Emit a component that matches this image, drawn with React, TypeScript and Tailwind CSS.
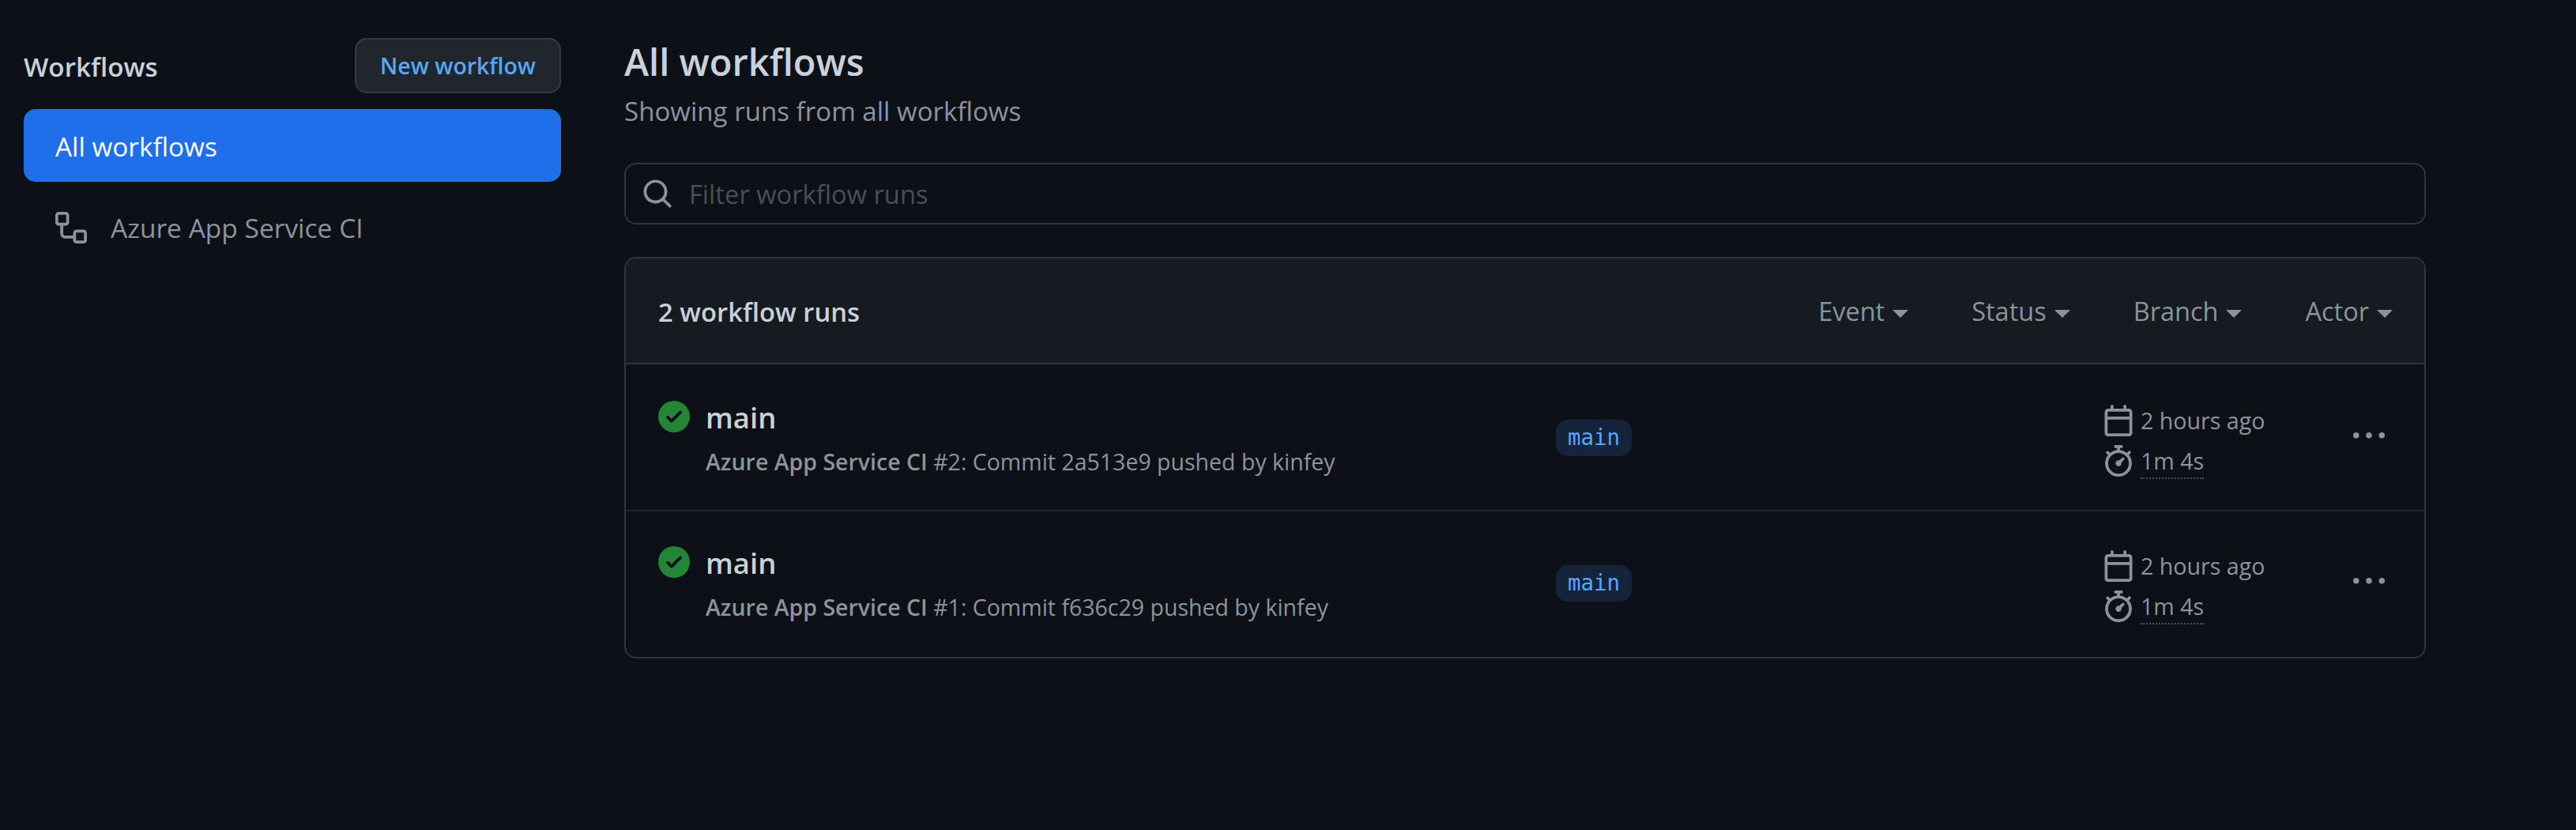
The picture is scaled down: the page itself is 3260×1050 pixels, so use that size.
const WORKFLOW = "M0 1.75C0 .784.784 0 1.75 0h3.5C6.216 0 7 .784 7 1.75v3.5A1.75 1.75 0 0 1 5.25 7H4v4a1 1 0 0 0 1 1h4v-1.25C9 9.784 9.784 9 10.75 9h3.5c.966 0 1.75.784 1.75 1.75v3.5A1.75 1.75 0 0 1 14.25 16h-3.5A1.75 1.75 0 0 1 9 14.25v-.75H5A2.5 2.5 0 0 1 2.5 11V7h-.75A1.75 1.75 0 0 1 0 5.25Zm1.75-.25a.25.25 0 0 0-.25.25v3.5c0 .138.112.25.25.25h3.5a.25.25 0 0 0 .25-.25v-3.5a.25.25 0 0 0-.25-.25Zm9 9a.25.25 0 0 0-.25.25v3.5c0 .138.112.25.25.25h3.5a.25.25 0 0 0 .25-.25v-3.5a.25.25 0 0 0-.25-.25Z";
const SEARCH = "M10.68 11.74a6 6 0 0 1-7.922-8.982 6 6 0 0 1 8.982 7.922l3.04 3.04a.749.749 0 0 1-.326 1.275.749.749 0 0 1-.734-.215ZM11.5 7a4.499 4.499 0 1 0-8.997 0A4.499 4.499 0 0 0 11.5 7Z";
const CHECK = "M8 16A8 8 0 1 1 8 0a8 8 0 0 1 0 16Zm3.78-9.72a.751.751 0 0 0-.018-1.042.751.751 0 0 0-1.042-.018L6.75 9.19 5.28 7.72a.751.751 0 0 0-1.042.018.751.751 0 0 0-.018 1.042l2 2a.75.75 0 0 0 1.06 0Z";
const CALENDAR = "M4.75 0a.75.75 0 0 1 .75.75V2h5V.75a.75.75 0 0 1 1.5 0V2h1.25c.966 0 1.75.784 1.75 1.75v10.5A1.75 1.75 0 0 1 13.25 16H2.75A1.75 1.75 0 0 1 1 14.25V3.75C1 2.784 1.784 2 2.75 2H4V.75A.75.75 0 0 1 4.75 0ZM2.5 7.5v6.75c0 .138.112.25.25.25h10.5a.25.25 0 0 0 .25-.25V7.5Zm10.75-4H2.75a.25.25 0 0 0-.25.25V6h11V3.75a.25.25 0 0 0-.25-.25Z";
const STOPWATCH = "M5.75.75A.75.75 0 0 1 6.5 0h3a.75.75 0 0 1 0 1.5h-.75v1l-.001.041a6.724 6.724 0 0 1 3.464 1.435l.007-.006.75-.75a.75.75 0 1 1 1.06 1.06l-.75.75-.006.007a6.75 6.75 0 1 1-10.548 0L2.72 5.03l-.75-.75a.751.751 0 0 1 .018-1.042.751.751 0 0 1 1.042-.018l.75.75.007.006A6.72 6.72 0 0 1 7.25 2.541V1.5H6.5a.75.75 0 0 1-.75-.75ZM8 14.5a5.25 5.25 0 1 0-.001-10.501A5.25 5.25 0 0 0 8 14.5Zm.389-6.7 1.33-1.33a.75.75 0 1 1 1.061 1.06L9.45 8.861A1.503 1.503 0 0 1 8 10.75a1.499 1.499 0 1 1 .389-2.95Z";
const KEBAB = "M8 9a1.5 1.5 0 1 0 0-3 1.5 1.5 0 0 0 0 3ZM1.5 9a1.5 1.5 0 1 0 0-3 1.5 1.5 0 0 0 0 3Zm13 0a1.5 1.5 0 1 0 0-3 1.5 1.5 0 0 0 0 3Z";

function Octicon({ d, className }: { d: string; className: string }) {
  return (
    <svg viewBox="0 0 16 16" fill="currentColor" className={`h-10 w-10 shrink-0 ${className}`}>
      <path d={d} />
    </svg>
  );
}

const runs = [
  { number: 2, commit: "2a513e9" },
  { number: 1, commit: "f636c29" },
];

const filters = ["Event", "Status", "Branch", "Actor"];

function RunRow({ number, commit }: { number: number; commit: string }) {
  return (
    <div className="grid h-[186px] grid-cols-[1136px_692px_1fr] pl-[41px] shadow-[inset_0_2px_0_#21262d] first:h-[184px] first:shadow-none">
      <div className="flex gap-[20px] pt-[46px]">
        <Octicon d={CHECK} className="text-[#238636]" />
        <div>
          <div className="h-[42px] text-[36.5px] leading-[42px] font-semibold text-[#c9d1d9]">main</div>
          <div className="mt-[15px] text-[28.5px] leading-[40px] text-[#8b949e]">
            <span className="font-semibold">Azure App Service CI</span> #{number}: Commit {commit} pushed by kinfey
          </div>
        </div>
      </div>
      <div className="pt-[70px]">
        <span className="flex h-[46px] w-[96px] items-center justify-center rounded-[15px] bg-[#15243a] font-['DejaVu_Sans_Mono',monospace] text-[27.5px] text-[#58a6ff]">
          main
        </span>
      </div>
      <div className="flex items-start justify-between pt-[51px] pr-[50px]">
        <div className="text-[28.6px] leading-[40px] text-[#8b949e]">
          <div className="flex gap-[8px]">
            <Octicon d={CALENDAR} className="" />
            2 hours ago
          </div>
          <div className="mt-[11px] flex gap-[8px]">
            <Octicon d={STOPWATCH} className="" />
            <span className="h-[43px] border-b-[2px] border-dotted border-[#484f58]">1m 4s</span>
          </div>
        </div>
        <Octicon d={KEBAB} className="mt-[20px] text-[#8b949e]" />
      </div>
    </div>
  );
}

export default function App() {
  return (
    <div className="flex h-[1050px] gap-[80px] bg-[#0d1117] pl-[30px] font-['Open_Sans',sans-serif]">
      {/* Sidebar */}
      <aside className="w-[680px] shrink-0 pt-[48px]">
        <div className="flex h-[70px] items-center justify-between">
          <h2 className="pt-[4px] text-[33.2px] font-semibold text-[#c9d1d9]">Workflows</h2>
          <button className="flex h-[70px] w-[261px] items-center justify-center rounded-[15px] border-[2px] border-[#363b42] bg-[#21262d] text-[28.4px] font-semibold text-[#58a6ff]">
            New workflow
          </button>
        </div>
        <div className="mt-[20px] flex h-[92px] items-center rounded-[15px] bg-[#1f6feb] pt-[3px] pl-[40px] text-[33.3px] text-white">
          All workflows
        </div>
        <div className="mt-[12px] flex h-[92px] items-center gap-[30px] pl-[40px] text-[33.5px] text-[#8b949e]">
          <Octicon d={WORKFLOW} className="" />
          Azure App Service CI
        </div>
      </aside>

      {/* Main */}
      <main className="w-[2280px] pt-[48px]">
        <h1 className="text-[47px] leading-[60px] font-semibold text-[#c9d1d9]">All workflows</h1>
        <p className="mt-[8px] text-[33.1px] leading-[50px] text-[#8b949e]">Showing runs from all workflows</p>

        <div className="mt-[40px] flex h-[78px] items-center gap-[20px] rounded-[15px] border-[2px] border-[#30363d] pl-[20px] text-[32.7px] text-[#484f58]">
          <Octicon d={SEARCH} className="text-[#8b949e]" />
          <span className="pt-[2px]">Filter workflow runs</span>
        </div>

        <div className="mt-[41px] overflow-hidden rounded-[15px] border-[2px] border-[#30363d]">
          <div className="flex h-[134px] items-center justify-between border-b-[2px] border-[#30363d] bg-[#161b22] pt-[3px] pr-[40px] pl-[41px]">
            <div className="text-[32.8px] font-semibold text-[#c9d1d9]">2 workflow runs</div>
            <div className="flex gap-[80px]">
              {filters.map((label) => (
                <div key={label} className="flex items-center gap-[10px] text-[32.5px] text-[#8b949e]">
                  {label}
                  <span className="mt-[4px] h-0 w-0 border-x-[10px] border-t-[10px] border-x-transparent border-t-[#8b949e]" />
                </div>
              ))}
            </div>
          </div>
          <div>
            {runs.map((run) => (
              <RunRow key={run.number} {...run} />
            ))}
          </div>
        </div>
      </main>
    </div>
  );
}
